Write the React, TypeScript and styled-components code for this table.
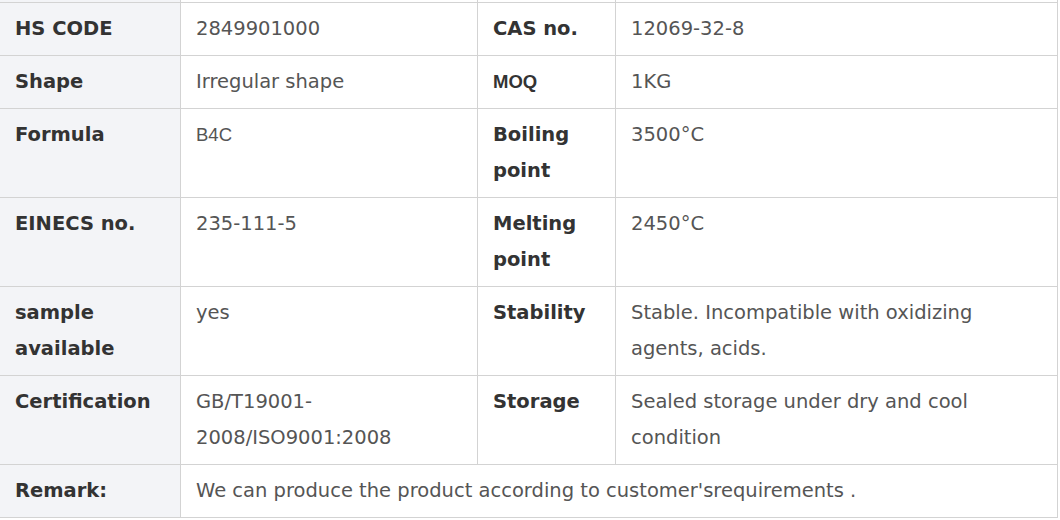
import styled, { createGlobalStyle } from "styled-components"

const Global = createGlobalStyle`
  html, body {
    margin: 0;
    padding: 0;
    background: #fff;
  }
  body {
    font-family: "DejaVu Sans", Verdana, sans-serif;
    overflow: hidden;
  }
`;

const Table = styled.table`
  border-collapse: collapse;
  table-layout: fixed;
  width: 1059px;
  margin: -1px 0 0 -1px;
  font-size: 19.5px;
  line-height: 36px;
`;

const Cell = styled.td<{ $head?: boolean; $shade?: boolean }>`
  border: 1px solid #d3d3d3;
  padding: 8px 15px;
  vertical-align: top;
  text-align: left;
  background: ${({ $shade }) => ($shade ? "#f3f4f7" : "#fff")};
  color: ${({ $head }) => ($head ? "#333" : "#555")};
  font-weight: ${({ $head }) => ($head ? "bold" : "normal")};
`;

// a few cells in the source were pasted in with an Arial-like face
const Pasted = styled.span`
  font-family: "Liberation Sans", Arial, sans-serif;
  font-size: 18.5px;
`;

const StubCell = styled.td<{ $shade?: boolean }>`
  border: 1px solid #d3d3d3;
  border-top: none;
  padding: 0;
  height: 3px;
  background: ${({ $shade }) => ($shade ? "#f3f4f7" : "#fff")};
`;

type Row = [string, string, string, string];

const pasted = ["B4C", "MOQ"];

const rows: Row[] = [
  ["HS CODE", "2849901000", "CAS no.", "12069-32-8"],
  ["Shape", "Irregular shape", "MOQ", "1KG"],
  ["Formula", "B4C", "Boiling point", "3500°C"],
  ["EINECS no.", "235-111-5", "Melting point", "2450°C"],
  ["sample available", "yes", "Stability", "Stable. Incompatible with oxidizing agents, acids."],
  ["Certification", "GB/T19001-2008/ISO9001:2008", "Storage", "Sealed storage under dry and cool condition"],
];

const text = (s: string) => (pasted.includes(s) ? <Pasted>{s}</Pasted> : s);

export default function App() {
  return (
    <>
      <Global />
      <Table>
        <colgroup>
          <col style={{ width: 181 }} />
          <col style={{ width: 297 }} />
          <col style={{ width: 138 }} />
          <col style={{ width: 442 }} />
        </colgroup>
        <tbody>
          <tr>
            <StubCell $shade />
            <StubCell />
            <StubCell />
            <StubCell />
          </tr>
          {rows.map((r) => (
            <tr key={r[0]}>
              <Cell $head $shade>{text(r[0])}</Cell>
              <Cell>{text(r[1])}</Cell>
              <Cell $head>{text(r[2])}</Cell>
              <Cell>{text(r[3])}</Cell>
            </tr>
          ))}
          <tr>
            <Cell $head $shade>Remark:</Cell>
            <Cell colSpan={3}>We can produce the product according to customer'srequirements .</Cell>
          </tr>
        </tbody>
      </Table>
    </>
  );
}
